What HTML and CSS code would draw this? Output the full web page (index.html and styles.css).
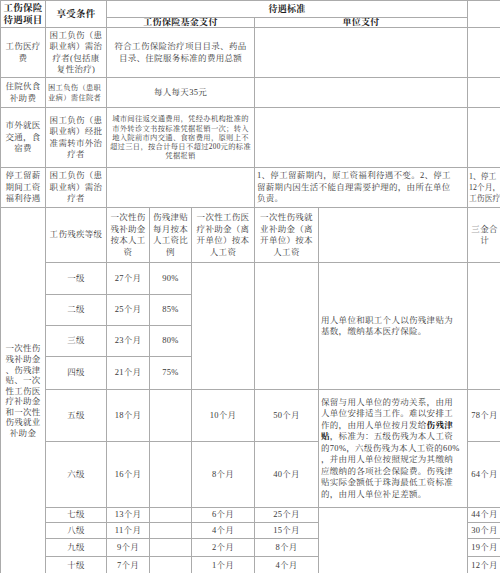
FILE: index.html
```html
<!DOCTYPE html>
<html lang="zh-CN">
<head>
<meta charset="utf-8">
<title>工伤保险待遇</title>
<link rel="stylesheet" href="styles.css">
</head>
<body>
<table class="grid">
  <colgroup>
    <col class="c1"><col class="c2"><col class="c3"><col class="c4"><col class="c5"><col class="c6"><col class="c7"><col class="c8">
  </colgroup>
  <tr class="h17">
    <th rowspan="2" class="th-big">工伤保险<br>待遇项目</th>
    <th rowspan="2" class="th-big">享受条件</th>
    <th colspan="5" class="th-sm">待遇标准</th>
    <th rowspan="2"></th>
  </tr>
  <tr class="h10">
    <th colspan="3" class="th-sm">工伤保险基金支付</th>
    <th colspan="2" class="th-sm">单位支付</th>
  </tr>
  <tr class="h50">
    <td>工伤医疗<br>费</td>
    <td>困工负伤（患<br>职业病）需治<br>疗者(包括康<br>复性治疗)</td>
    <td colspan="3">符合工伤保险治疗项目目录、药品<br>目录、住院服务标准的费用总额</td>
    <td colspan="2"></td>
    <td></td>
  </tr>
  <tr class="h30">
    <td>住院伙食<br>补助费</td>
    <td class="small left">困工负伤（患职<br>业病）需住院者</td>
    <td colspan="3">每人每天35元</td>
    <td colspan="2"></td>
    <td></td>
  </tr>
  <tr class="h60">
    <td>市外就医<br>交通，食<br>宿费</td>
    <td>困工负伤（患<br>职业病）经批<br>准需转市外治<br>疗者</td>
    <td colspan="3" class="small">城市间往返交通费用，凭经办机构批准的<br>市外转诊文书按标准凭据报销一次；转入<br>地入院前市内交通、食宿费用，原则上不<br>超过三日，按合计每日不超过200元的标准<br>凭据报销</td>
    <td colspan="2"></td>
    <td></td>
  </tr>
  <tr class="h40">
    <td>停工留薪<br>期间工资<br>福利待遇</td>
    <td>困工负伤（患<br>职业病）需治<br>疗者</td>
    <td colspan="3"></td>
    <td colspan="2" class="left">1、停工留薪期内，原工资福利待遇不变。2、停工<br>留薪期内因生活不能自理需要护理的，由所在单位<br>负责。</td>
    <td class="left edge">1、停工<br>12个月，<br>工伤医疗</td>
  </tr>
  <tr class="h55">
    <td rowspan="11" class="tight">一次性伤<br>残补助金<br>、伤残津<br>贴、一次<br>性工伤医<br>疗补助金<br>和一次性<br>伤残就业<br>补助金</td>
    <td>工伤残疾等级</td>
    <td>一次性伤<br>残补助金<br>按本人工<br>资</td>
    <td>伤残津贴<br>每月按本<br>人工资比<br>例</td>
    <td>一次性工伤医<br>疗补助金（离<br>开单位）按本<br>人工资</td>
    <td>一次性伤残就<br>业补助金（离<br>开单位）按本<br>人工资</td>
    <td></td>
    <td>三金合<br>计</td>
  </tr>
  <tr class="h32">
    <td>一级</td><td>27个月</td><td>90%</td>
    <td rowspan="4"></td>
    <td rowspan="4"></td>
    <td rowspan="4" class="left">用人单位和职工个人以伤残津贴为<br>基数，缴纳基本医疗保险。</td>
    <td rowspan="4"></td>
  </tr>
  <tr class="h31"><td>二级</td><td>25个月</td><td>85%</td></tr>
  <tr class="h31"><td>三级</td><td>23个月</td><td>80%</td></tr>
  <tr class="h33"><td>四级</td><td>21个月</td><td>75%</td></tr>
  <tr class="h52">
    <td>五级</td><td>18个月</td><td></td><td>10个月</td><td>50个月</td>
    <td rowspan="2" class="left">保留与用人单位的劳动关系，由用<br>人单位安排适当工作。难以安排工<br>作的，由用人单位按月发给<b>伤残津<br>贴</b>，标准为：五级伤残为本人工资<br>的70%，六级伤残为本人工资的60%<br>，并由用人单位按照规定为其缴纳<br>应缴纳的各项社会保险费。伤残津<br>贴实际金额低于珠海最低工资标准<br>的，由用人单位补足差额。</td>
    <td>78个月</td>
  </tr>
  <tr class="h66"><td>六级</td><td>16个月</td><td></td><td>8个月</td><td>40个月</td><td>64个月</td></tr>
  <tr class="h15">
    <td>七级</td><td>13个月</td><td></td><td>6个月</td><td>25个月</td>
    <td rowspan="4"></td>
    <td>44个月</td>
  </tr>
  <tr class="h16"><td>八级</td><td>11个月</td><td></td><td>4个月</td><td>15个月</td><td>30个月</td></tr>
  <tr class="h18"><td>九级</td><td>9个月</td><td></td><td>2个月</td><td>8个月</td><td>19个月</td></tr>
  <tr class="h18"><td>十级</td><td>7个月</td><td></td><td>1个月</td><td>4个月</td><td>12个月</td></tr>
</table>
</body>
</html>
```

FILE: styles.css
```css
html, body {
  margin: 0;
  padding: 0;
  background: #ffffff;
  overflow: hidden;
}

.grid {
  border-collapse: collapse;
  table-layout: fixed;
  width: 501px;
  font-family: "Liberation Serif", "Noto Serif CJK SC", "Noto Sans CJK SC", serif;
  font-size: 8.5px;
  line-height: 11.5px;
  color: #3a3a3a;
}

.c1 { width: 45px; }
.c2 { width: 61px; }
.c3 { width: 43px; }
.c4 { width: 42px; }
.c5 { width: 63px; }
.c6 { width: 64px; }
.c7 { width: 149px; }
.c8 { width: 34px; }

.grid td,
.grid th {
  border: 1px solid #ababab;
  padding: 0 1px;
  text-align: center;
  vertical-align: middle;
  white-space: nowrap;
  overflow: hidden;
  letter-spacing: 0.3px;
}

.grid th {
  font-weight: bold;
  color: #1e1e1e;
}

.th-big {
  font-size: 9.5px;
  line-height: 12px;
}

.th-sm {
  font-size: 9px;
  line-height: 9px;
}

.grid .left {
  text-align: left;
  padding-left: 2px;
}

.grid .edge {
  padding-left: 1px;
  letter-spacing: 0;
  font-size: 7.8px;
  line-height: 11px;
}

.grid .small {
  font-size: 7.3px;
  line-height: 9.3px;
}

.grid .tight {
  line-height: 10.6px;
}

.grid b {
  color: #111;
}

.h10 { height: 10px; }
.h15 { height: 15px; }
.h16 { height: 16px; }
.h17 { height: 17px; }
.h18 { height: 18px; }
.h30 { height: 30px; }
.h31 { height: 31px; }
.h32 { height: 32px; }
.h33 { height: 33px; }
.h40 { height: 40px; }
.h50 { height: 50px; }
.h52 { height: 52px; }
.h55 { height: 55px; }
.h60 { height: 60px; }
.h66 { height: 66px; }
```
